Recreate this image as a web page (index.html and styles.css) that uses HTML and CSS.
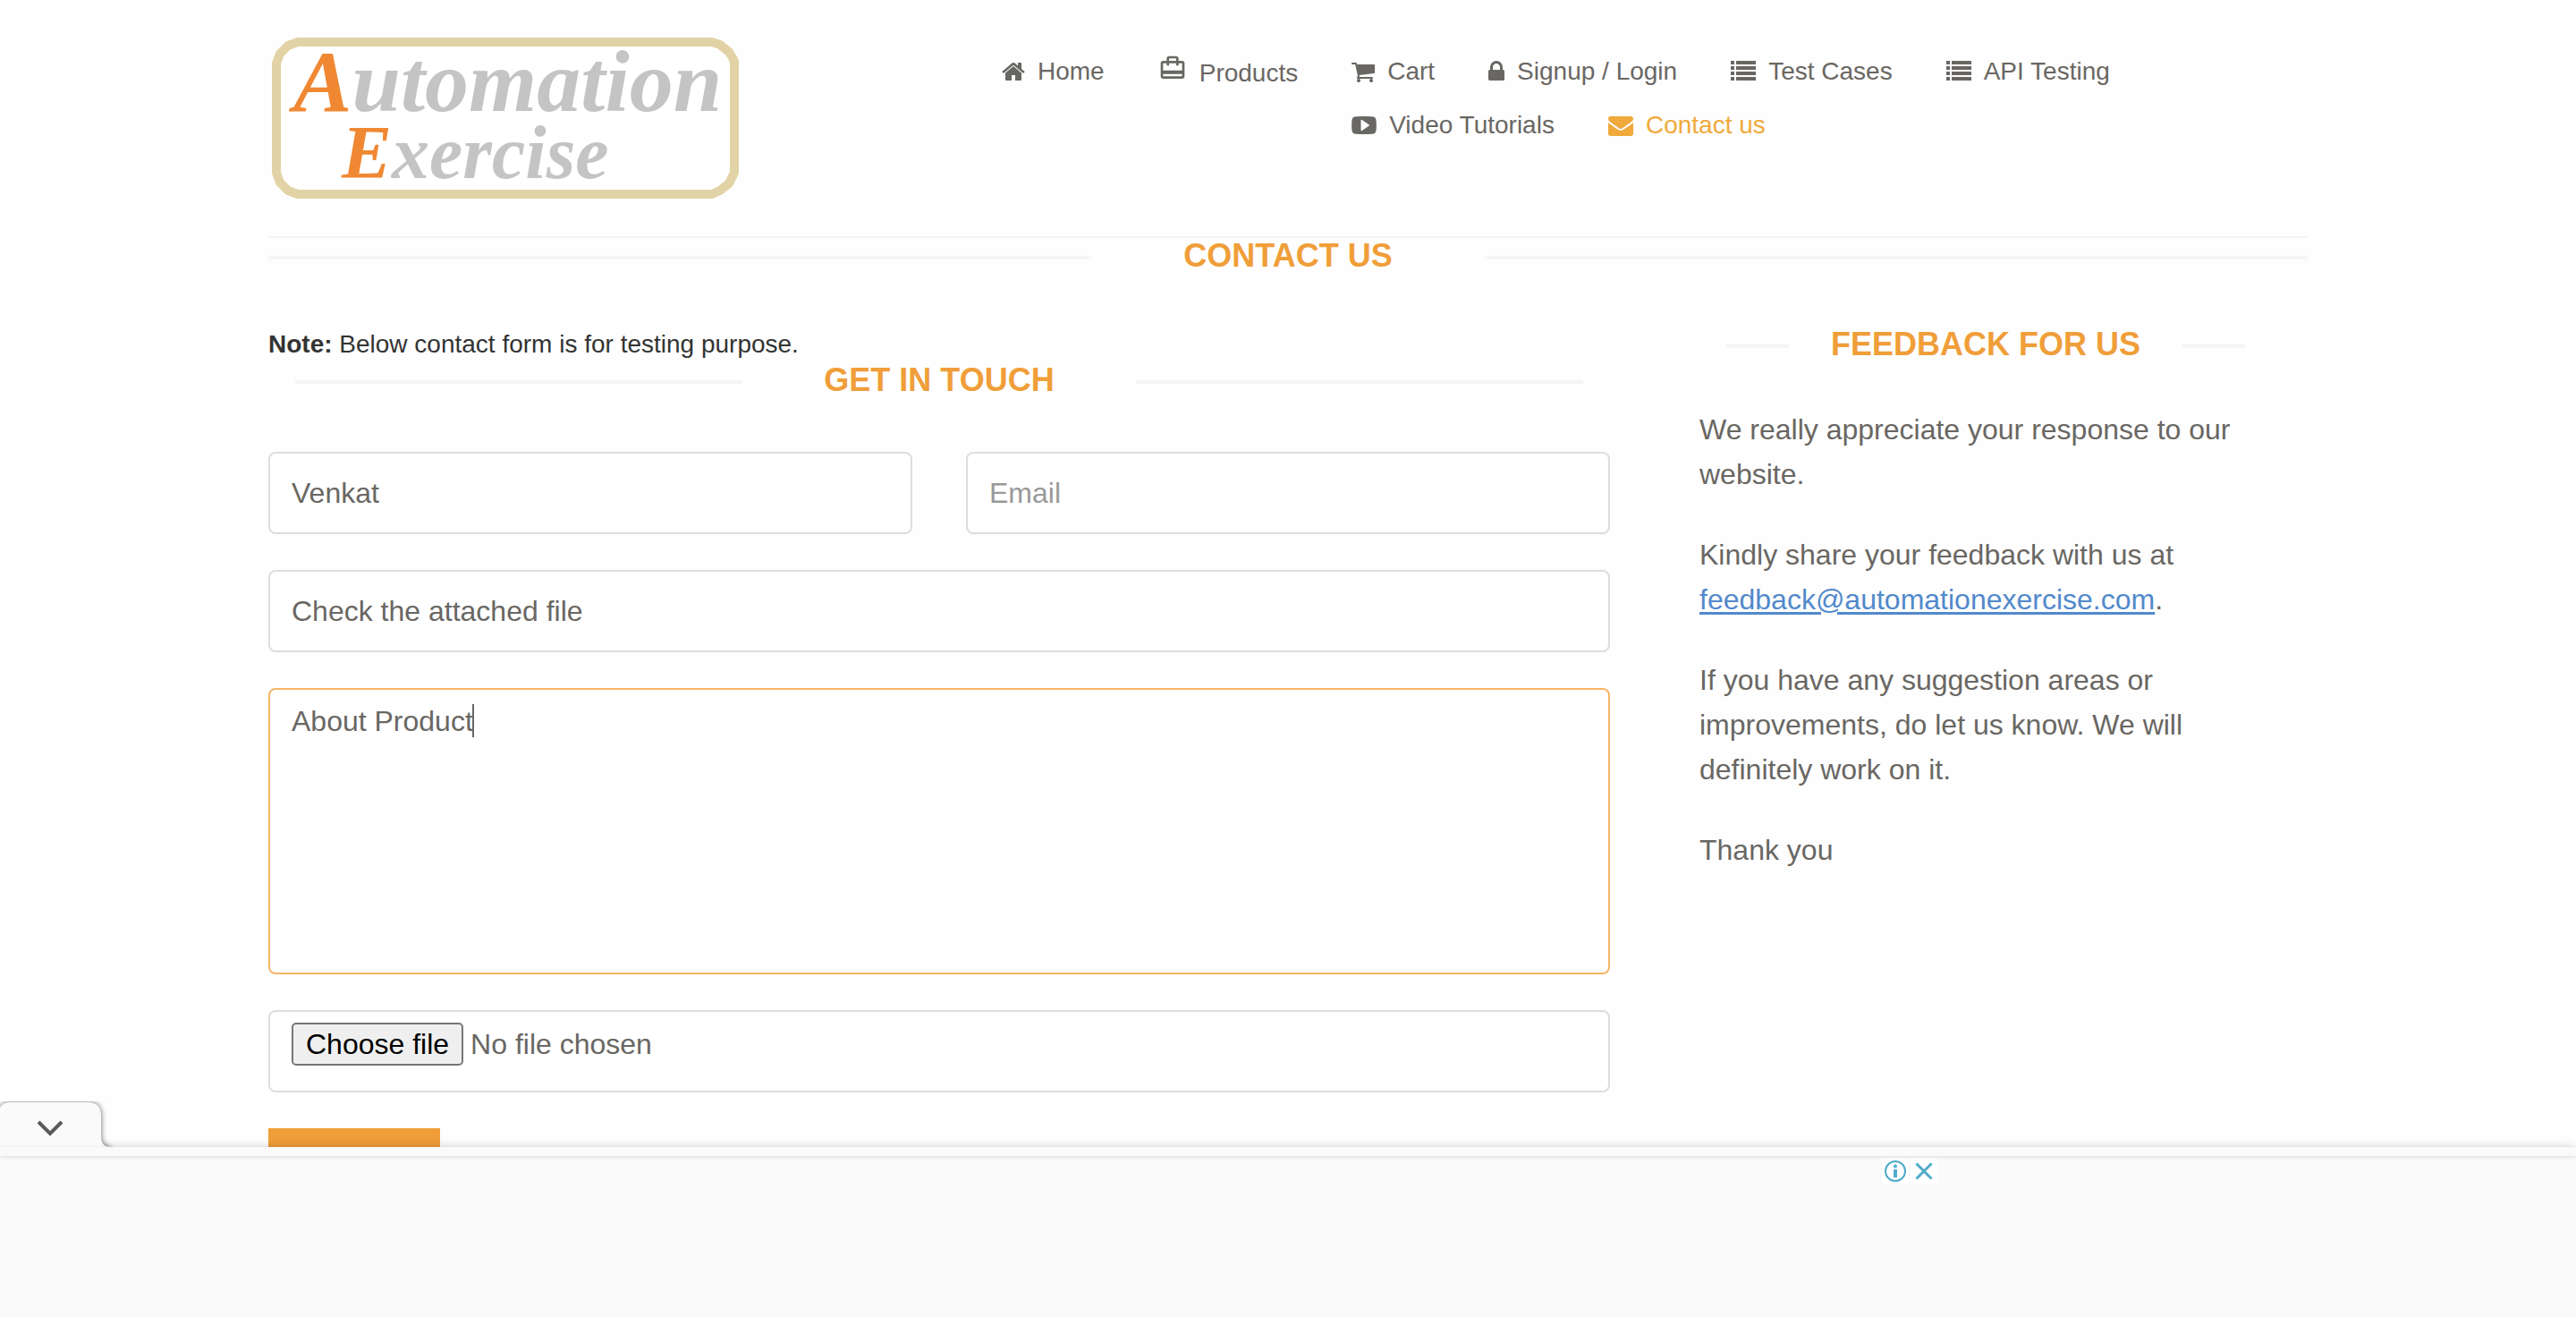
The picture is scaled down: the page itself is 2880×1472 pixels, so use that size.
FILE: index.html
```html
<!DOCTYPE html>
<html lang="en-GB">
<head>
<meta charset="utf-8">
<title>Automation Exercise - Contact Us</title>
<link rel="stylesheet" href="styles.css">
</head>
<body>
<svg width="0" height="0" class="sprite" aria-hidden="true">
  <symbol id="list" viewBox="0 0 28 28">
    <path d="M0 2h4v4H0zM6 2h22v4H6zM0 8h4v4H0zM6 8h22v4H6zM0 14h4v4H0zM6 14h22v4H6zM0 20h4v4H0zM6 20h22v4H6z"/>
  </symbol>
</svg>

<header class="container">
  <div class="header row">
    <div class="col">
      <a class="logo" href="#" aria-label="Automation Exercise">
        <svg width="556" height="184" viewBox="0 0 556 184">
          <path d="M33 7H496L505 10 515 18 521 28V153L515 165 505 173 496 177H33L22 173 13 164 9 153V31L13 20 22 11Z" fill="#fff" stroke="#e2d3a6" stroke-width="10" stroke-linejoin="round"/>
          <text x="28" y="84" font-size="98"><tspan class="logo-cap">A</tspan>utomation</text>
          <text x="82" y="159" font-size="84"><tspan class="logo-cap">E</tspan>xercise</text>
        </svg>
      </a>
    </div>
    <nav class="col">
      <ul class="menu">
        <li><a href="#"><svg width="26" height="28" viewBox="0 0 1664 1792"><path d="M1408 992v480q0 26-19 45t-45 19h-384v-384h-256v384h-384q-26 0-45-19t-19-45v-480q0-1 .5-3t.5-3l575-474 575 474q1 2 1 6zm223-69l-62 74q-8 9-21 11h-3q-13 0-21-7l-692-577-692 577q-12 8-24 7-13-2-21-11l-62-74q-8-10-7-23.500t11-21.500l719-599q32-26 76-26t76 26l244 204v-195q0-14 9-23t23-9h192q14 0 23 9t9 23v408l219 182q10 8 11 21.500t-7 23.500z"/></svg>Home</a></li>
        <li><a href="#" class="products"><svg width="32" height="32" viewBox="0 0 24 24"><path d="M20 6h-3V4c0-1.110-.89-2-2-2H9c-1.110 0-2 .89-2 2v2H4c-1.110 0-2 .89-2 2v11c0 1.110.89 2 2 2h16c1.110 0 2-.89 2-2V8c0-1.110-.89-2-2-2zM9 4h6v2H9V4zm11 15H4v-2h16v2zm0-5H4V8h3v2h2V8h6v2h2V8h3v6z"/></svg>Products</a></li>
        <li><a href="#"><svg width="26" height="28" viewBox="0 0 1664 1792"><path d="M640 1536q0 52-38 90t-90 38-90-38-38-90 38-90 90-38 90 38 38 90zm896 0q0 52-38 90t-90 38-90-38-38-90 38-90 90-38 90 38 38 90zm128-1088v512q0 24-16.500 42.500t-40.500 21.500l-1044 122q13 60 13 70 0 16-24 64h920q26 0 45 19t19 45-19 45-45 19h-1024q-26 0-45-19t-19-45q0-11 8-31.500t16-36 21.500-40 15.500-29.500l-177-823h-204q-26 0-45-19t-19-45 19-45 45-19h256q16 0 28.500 6.500t19.500 15.500 13 24.500 8 26 5.500 29.500 4.500 26h1201q26 0 45 19t19 45z"/></svg>Cart</a></li>
        <li><a href="#"><svg width="18" height="28" viewBox="0 0 1152 1792"><path d="M320 768h512v-192q0-106-75-181t-181-75-181 75-75 181v192zm832 96v576q0 40-28 68t-68 28h-960q-40 0-68-28t-28-68v-576q0-40 28-68t68-28h32v-192q0-184 132-316t316-132 316 132 132 316v192h32q40 0 68 28t28 68z"/></svg>Signup / Login</a></li>
        <li><a href="#"><svg width="28" height="28"><use href="#list"/></svg>Test Cases</a></li>
        <li><a href="#"><svg width="28" height="28"><use href="#list"/></svg>API Testing</a></li>
        <li><a href="#"><svg width="28" height="28" viewBox="0 0 28 28"><path fill-rule="evenodd" d="M5 4.300Q14 3.700 23 4.300Q27 4.500 27.500 8Q28.200 14 27.500 20Q27 23.500 23 23.700Q14 24.300 5 23.700Q1 23.500.5 20Q-.2 14 .5 8Q1 4.500 5 4.300ZM10.500 8.500V19.500Q10.700 20.500 11.700 20L19.500 14.700Q20.200 14 19.500 13.300L11.700 8Q10.700 7.500 10.500 8.500Z"/></svg>Video Tutorials</a></li>
        <li><a href="#" class="active"><svg width="28" height="28" viewBox="0 0 1792 1792"><path d="M1792 710v794q0 66-47 113t-113 47h-1472q-66 0-113-47t-47-113v-794q44 49 101 87 362 246 497 345 57 42 92.500 65.500t94.500 48 110 24.500h2q51 0 110-24.500t94.500-48 92.500-65.500q170-123 498-345 57-39 100-87zm0-294q0 79-49 151t-122 123q-376 261-468 325-10 7-42.500 31t-54 38.500-52 32.500-57.500 27-50 9h-2q-23 0-50-9t-57.500-27-52-32.500-54-38.500-42.500-31q-91-64-262-182.500t-205-142.500q-62-42-117-115.500t-55-136.500q0-78 41.500-130t118.500-52h1472q65 0 112.500 47t47.500 113z"/></svg>Contact us</a></li>
      </ul>
    </nav>
  </div>
</header>

<main class="container">
  <h2 class="title page-title"><span>Contact Us</span></h2>
  <div class="content row">
    <section class="col">
      <p class="note"><b>Note:</b> Below contact form is for testing purpose.</p>
      <h2 class="title"><span>Get In Touch</span></h2>
      <form class="contact-form">
        <div class="pair">
          <input class="field" type="text" aria-label="Name" value="Venkat">
          <input class="field" type="email" aria-label="Email" placeholder="Email">
        </div>
        <input class="field" type="text" aria-label="Subject" value="Check the attached file">
        <div class="message">
          <textarea class="field" aria-label="Your message">About Product</textarea>
          <i class="caret"></i>
        </div>
        <label class="field upload">
          <input type="file">
          <span class="choose">Choose file</span>
          <span>No file chosen</span>
        </label>
        <button class="submit" type="submit">Submit</button>
      </form>
    </section>
    <aside class="col feedback">
      <h2 class="title"><span>Feedback For Us</span></h2>
      <div class="feedback-text">
        <p>We really appreciate your response to our website.</p>
        <p>Kindly share your feedback with us at <a href="mailto:feedback@automationexercise.com">feedback@automationexercise.com</a>.</p>
        <p>If you have any suggestion areas or improvements, do let us know. We will definitely work on it.</p>
        <p>Thank you</p>
      </div>
    </aside>
  </div>
</main>

<div class="ad">
  <button class="collapse" type="button" aria-label="Collapse ad">
    <svg width="130" height="51" viewBox="0 0 130 51">
      <path class="tab" d="M0 7Q3 1 12 1H98Q113 1 113 16V38Q113 51 123 51V56H0Z"/>
      <path d="M43 23L56 36L69 23" fill="none" stroke="#5a5a5a" stroke-width="4"/>
    </svg>
  </button>
  <div class="ad-edge"></div>
  <div class="ad-body">
    <div class="ad-choices">
      <a href="#" aria-label="Ad information"><svg width="30" height="30" viewBox="0 0 30 30"><circle cx="15" cy="15" r="11" fill="none" stroke="#4fabca" stroke-width="2"/><circle cx="15" cy="9.500" r="2" fill="#4fabca"/><path d="M13 13h4v9h-4z" fill="#4fabca"/></svg></a>
      <button type="button" aria-label="Close ad"><svg width="30" height="30" viewBox="0 0 30 30"><path d="M6.500 6.500L23.500 23.500M23.500 6.500L6.500 23.500" stroke="#4fabca" stroke-width="3"/></svg></button>
    </div>
  </div>
</div>
</body>
</html>
```
FILE: styles.css
```css
* {
  box-sizing: border-box;
}

body {
  margin: 0;
  background: #fefefe;
  color: #696763;
  font: 32px/50px "Liberation Sans", Arial, Helvetica, sans-serif;
}

h2,
p,
ul {
  margin: 0;
  padding: 0;
}

input,
textarea,
button {
  font: inherit;
  color: inherit;
}

.sprite {
  position: absolute;
}

.container {
  max-width: 2340px;
  margin: 0 auto;
  padding: 0 30px;
}

.row {
  display: grid;
  margin: 0 -30px;
}

.col {
  min-width: 0;
  padding: 0 30px;
}

/* Header */

.header {
  grid-template-columns: 1fr 2fr;
  margin: 0;
  padding: 40px 0;
  border-bottom: 2px solid #f5f5f5;
}

.header .col {
  padding: 0;
}

.header nav.col {
  padding: 20px 0 0 60px;
}

.logo svg {
  display: block;
  max-width: 100%;
  overflow: visible;
}

.logo text {
  font-family: "Liberation Serif", "Times New Roman", serif;
  font-style: italic;
  font-weight: bold;
  fill: #c4c4c4;
}

.logo .logo-cap {
  fill: #f08833;
}

.menu {
  list-style: none;
}

.menu li {
  float: left;
  margin-right: 60px;
}

.menu a {
  display: flex;
  align-items: center;
  gap: 14px;
  height: 40px;
  margin-bottom: 20px;
  color: inherit;
  font-size: 28px;
  line-height: 40px;
  text-decoration: none;
  white-space: nowrap;
}

.menu svg {
  fill: currentColor;
}

.menu .products {
  align-items: flex-start;
  height: 44px;
  line-height: 44px;
}

.menu .active {
  color: #f0a93b;
}

/* Section titles with a rule on both sides */

.title {
  display: flex;
  align-items: center;
  margin: 0 30px;
  color: #f09e3a;
  font-size: 36px;
  line-height: 40px;
  text-align: center;
  text-transform: uppercase;
}

.title::before,
.title::after {
  content: "";
  flex: 1;
  height: 4px;
  margin-top: 4px;
  background: #f5f5f5;
}

.title span {
  flex: 0 0 440px;
}

.page-title {
  margin: 0 0 59px;
}

/* Contact form */

.content {
  grid-template-columns: 2fr 1fr;
}

.note {
  color: #333;
  font-size: 28px;
  line-height: 40px;
}

.contact-form {
  display: grid;
  gap: 40px;
  margin-top: 60px;
}

.pair {
  display: grid;
  grid-template-columns: 1fr 1fr;
  gap: 60px;
}

.field {
  display: block;
  width: 100%;
  height: 92px;
  padding: 12px 24px;
  border: 2px solid #ddd;
  border-radius: 8px;
  outline: none;
  background: #fff;
  line-height: 46px;
}

.field::placeholder {
  color: #999;
  opacity: 1;
}

.message {
  position: relative;
}

.message .field {
  height: 320px;
  border-color: #f5b467;
  resize: none;
}

.caret {
  position: absolute;
  top: 18px;
  left: 228px;
  width: 2px;
  height: 37px;
  background: #696763;
}

.upload {
  position: relative;
  display: flex;
  align-items: flex-start;
  gap: 8px;
}

.upload input {
  position: absolute;
  inset: 0;
  opacity: 0;
}

.upload span {
  line-height: 48px;
}

.upload .choose {
  padding: 0 14px;
  border: 2px solid #767676;
  border-radius: 5px;
  background: #efefef;
  color: #000;
  line-height: 44px;
}

.submit {
  justify-self: start;
  width: 192px;
  height: 68px;
  border: 0;
  background: #f09e3a;
  color: #fff;
  font-size: 28px;
}

/* Feedback column */

.feedback {
  padding: 0 70px;
}

.feedback-text {
  display: grid;
  gap: 40px;
  margin-top: 50px;
}

.feedback-text a {
  color: #5289cb;
  text-decoration-thickness: 3px;
  text-underline-offset: 3px;
}

/* Anchored ad */

.ad {
  position: fixed;
  right: 0;
  bottom: 0;
  left: 0;
  background: #fafafa;
  box-shadow: 0 0 12px rgba(0, 0, 0, 0.15);
}

.collapse {
  position: absolute;
  bottom: 100%;
  left: 0;
  padding: 0;
  border: 0;
  background: none;
}

.collapse svg {
  display: block;
  overflow: hidden;
}

.tab {
  fill: #fafafa;
  filter: drop-shadow(0 0 3px rgba(0, 0, 0, 0.6));
}

.ad-edge {
  position: relative;
  height: 10px;
  background: #fafafa;
  box-shadow: 0 1px 5px rgba(0, 0, 0, 0.12);
}

.ad-body {
  height: 180px;
  padding-top: 2px;
}

.ad-choices {
  display: flex;
  justify-content: flex-end;
  gap: 2px;
  max-width: 1452px;
  margin: 0 auto;
}

.ad-choices a,
.ad-choices button {
  display: block;
  width: 30px;
  height: 30px;
  padding: 0;
  border: 0;
  background: #fff;
}

.ad-choices svg {
  display: block;
}
```
